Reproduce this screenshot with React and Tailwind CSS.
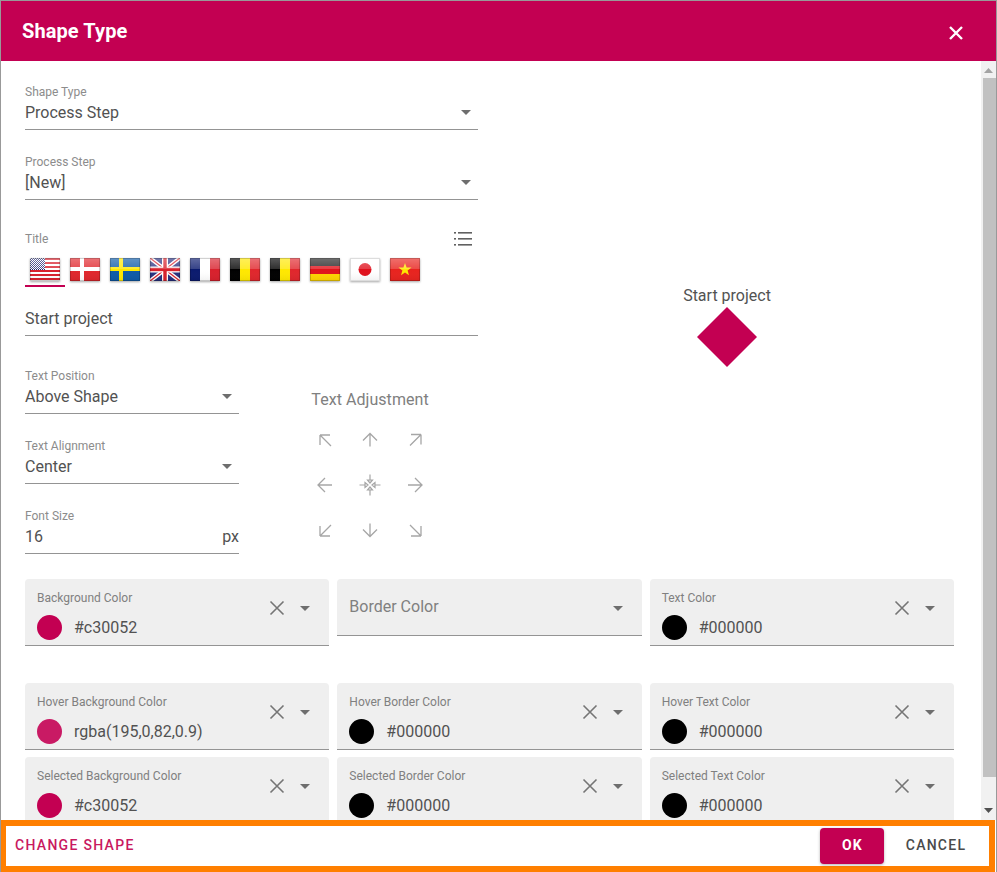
const row1 = [
  { label: 'Background Color', value: '#c30052', color: 'bg-[#c30052]' },
  { label: 'Border Color' },
  { label: 'Text Color', value: '#000000', color: 'bg-black' },
]
const row2 = [
  { label: 'Hover Background Color', value: 'rgba(195,0,82,0.9)', color: 'bg-[#c91a64]' },
  { label: 'Hover Border Color', value: '#000000', color: 'bg-black' },
  { label: 'Hover Text Color', value: '#000000', color: 'bg-black' },
]
const row3 = [
  { label: 'Selected Background Color', value: '#c30052', color: 'bg-[#c30052]' },
  { label: 'Selected Border Color', value: '#000000', color: 'bg-black' },
  { label: 'Selected Text Color', value: '#000000', color: 'bg-black' },
]

function Caret({ className = '' }) {
  return (
    <svg width="10" height="5" viewBox="0 0 10 5" className={className}>
      <path d="M0 0h10L5 5z" fill="#6e6e6e" />
    </svg>
  )
}

function Clear() {
  return (
    <svg width="16" height="16" viewBox="0 0 16 16" fill="none" stroke="#757575" strokeWidth="1.6">
      <path d="M1.5 1.5l13 13M14.5 1.5l-13 13" />
    </svg>
  )
}

function SelectField({ label, value, caret = true, suffix }) {
  return (
    <div className="w-full h-[46px] border-b border-[#949494]">
      <div className="h-[15px] pt-px text-[12px] leading-[14px] text-[#8c8c8c]">{label}</div>
      <div className="h-[30px] pt-[2px] flex items-start justify-between text-[16px] leading-[24px] text-[#525252]">
        <span>{value}</span>
        {caret && <Caret className="mt-[9px] mr-[7px]" />}
        {suffix && <span>{suffix}</span>}
      </div>
    </div>
  )
}

function ColorField({ label, value, color }) {
  if (!value) {
    return (
      <div className="h-[57px] bg-[#efefef] rounded-t border-b border-[#949494] pl-3 pr-[19px] flex items-start justify-between">
        <span className="mt-4 text-[16px] leading-[24px] text-[#808080]">{label}</span>
        <Caret className="mt-[27px]" />
      </div>
    )
  }
  return (
    <div className="h-[67px] bg-[#efefef] rounded-t border-b border-[#949494] pl-3 pr-[19px] flex items-start justify-between">
      <div>
        <div className="mt-3 text-[12px] leading-[14px] text-[#808080]">{label}</div>
        <div className="mt-[10px] flex items-center gap-3">
          <span className={`w-[25px] h-[25px] rounded-full ${color}`}></span>
          <span className="text-[16px] leading-[24px] text-[#525252]">{value}</span>
        </div>
      </div>
      <div className="mt-[21px] flex items-center gap-[15px]">
        <Clear />
        <Caret />
      </div>
    </div>
  )
}

function Flag({ children, light }) {
  return (
    <svg width="30" height="23" viewBox="0 0 30 23" className="drop-shadow-[0_1px_1px_rgba(0,0,0,0.35)]">
      <defs>
        <linearGradient id="gloss" x1="0" y1="0" x2="0" y2="1">
          <stop offset="0" stopColor="#fff" stopOpacity="0.35" />
          <stop offset="0.48" stopColor="#fff" stopOpacity="0.18" />
          <stop offset="0.5" stopColor="#fff" stopOpacity="0" />
          <stop offset="1" stopColor="#000" stopOpacity="0.06" />
        </linearGradient>
        <pattern id="stars" width="2" height="2" patternUnits="userSpaceOnUse">
          <rect width="2" height="2" fill="#1c2270" />
          <rect width="1" height="1" fill="#fff" />
          <rect x="1" y="1" width="1" height="1" fill="#fff" />
        </pattern>
      </defs>
      {children}
      <rect width="30" height="23" fill="url(#gloss)" />
      <rect x="0.5" y="0.5" width="29" height="22" fill="none" stroke={light ? '#dddddd' : '#000'} strokeOpacity={light ? 1 : 0.18} />
    </svg>
  )
}

const flags = [
  <Flag>
    <rect width="30" height="23" fill="#fff" />
    {[0, 4, 8, 12, 16, 20].map(y => <rect key={y} y={y} width="30" height="2" fill="#d8202c" />)}
    <rect width="15" height="12" fill="url(#stars)" />
  </Flag>,
  <Flag>
    <rect width="30" height="23" fill="#e0262c" />
    <rect x="10" width="4" height="23" fill="#fff" />
    <rect y="9" width="30" height="4" fill="#fff" />
  </Flag>,
  <Flag>
    <rect width="30" height="23" fill="#0d5aa7" />
    <rect x="9" width="4" height="23" fill="#ffe800" />
    <rect y="9" width="30" height="4" fill="#ffe800" />
  </Flag>,
  <Flag>
    <rect width="30" height="23" fill="#27307f" />
    <path d="M0 0L30 23M30 0L0 23" stroke="#fff" strokeWidth="4" />
    <path d="M0 0L30 23M30 0L0 23" stroke="#d8202c" strokeWidth="1.3" />
    <rect x="12" width="6" height="23" fill="#fff" />
    <rect y="8.5" width="30" height="6" fill="#fff" />
    <rect x="13.3" width="3.4" height="23" fill="#d8202c" />
    <rect y="9.8" width="30" height="3.4" fill="#d8202c" />
  </Flag>,
  <Flag>
    <rect width="10" height="23" fill="#0a1a6e" />
    <rect x="10" width="10" height="23" fill="#fff" />
    <rect x="20" width="10" height="23" fill="#d8202c" />
  </Flag>,
  <Flag>
    <rect width="10" height="23" fill="#000" />
    <rect x="10" width="10" height="23" fill="#ffe800" />
    <rect x="20" width="10" height="23" fill="#e0262c" />
  </Flag>,
  <Flag>
    <rect width="10" height="23" fill="#000" />
    <rect x="10" width="10" height="23" fill="#ffe800" />
    <rect x="20" width="10" height="23" fill="#e0262c" />
  </Flag>,
  <Flag>
    <rect width="30" height="8" fill="#222" />
    <rect y="8" width="30" height="8" fill="#e0141c" />
    <rect y="16" width="30" height="7" fill="#ffd500" />
  </Flag>,
  <Flag light>
    <rect width="30" height="23" fill="#fff" />
    <circle cx="15" cy="11.5" r="6.5" fill="#e0101c" />
  </Flag>,
  <Flag>
    <rect width="30" height="23" fill="#e8231e" />
    <path d="M15 5l1.6 4.6h4.9l-3.9 2.9 1.4 4.7-4-2.8-4 2.8 1.4-4.7-3.9-2.9h4.9z" fill="#ffe800" />
  </Flag>,
]

const adjust = [
  'M7 7h10M7 7v10M7 7l11 11',
  'M12 5.500v13M5 12.500l7-7 7 7',
  'M18 6.500H8M18 6.500v10M18 6.500L7 17.500',
  'M5 12h14M12 5l-7 7 7 7',
  null,
  'M5 12h14M12 5l7 7-7 7',
  'M7 18h10M7 18V8M7 18L18 7',
  'M12 5.500v13M5 11.500l7 7 7-7',
  'M18 18H8M18 18V8M18 18L7 7',
]

function Center() {
  return (
    <svg width="24" height="24" viewBox="0 0 24 24" fill="none" stroke="#a6a6a6" strokeWidth="1.2">
      <path d="M12 1.500v6M12 16.500v6M1.500 12h6M16.500 12h6" />
      <path d="M12 10l-2.500-3h5zM12 14l-2.500 3h5zM10 12l-3-2.500v5zM14 12l3-2.500v5z" />
    </svg>
  )
}

export default function App() {
  return (
    <div className="w-[997px] h-[872px] flex flex-col bg-white border-x border-t border-[#999999] overflow-hidden font-['Roboto',sans-serif]">
      <header className="h-[60px] shrink-0 bg-[#c30052] pl-[21px] pr-[32px] flex items-center justify-between">
        <h1 className="text-[20px] font-bold tracking-[0.1px] text-white">Shape Type</h1>
        <svg width="16" height="16" viewBox="0 0 16 16" stroke="#fff" strokeWidth="2.4" className="mt-[3px]">
          <path d="M2 2l12 12M14 2L2 14" />
        </svg>
      </header>

      <div className="flex-1 min-h-0 flex">
        <div className="flex-1 min-w-0 overflow-hidden pl-6 pt-[23px]">
          <div className="flex">
            <div className="w-[453px] shrink-0">
              <SelectField label="Shape Type" value="Process Step" />
              <div className="mt-6">
                <SelectField label="Process Step" value="[New]" />
              </div>
              <div className="mt-8 flex items-center justify-between h-[14px]">
                <span className="text-[12px] leading-[14px] text-[#8c8c8c]">Title</span>
                <svg width="20" height="16" viewBox="0 0 20 16" fill="#616161" className="mr-[5px]">
                  <rect x="5" y="1" width="14" height="1.6" />
                  <rect x="5" y="7" width="14" height="1.6" />
                  <rect x="5" y="13" width="14" height="1.6" />
                  <rect x="1" y="1" width="2" height="1.6" />
                  <rect x="1" y="7" width="2" height="1.6" />
                  <rect x="1" y="13" width="2" height="1.6" />
                </svg>
              </div>
              <div className="mt-[5px] flex">
                {flags.map((flag, i) => (
                  <div key={i} className={`w-10 h-9 pt-[7px] flex justify-center ${i === 0 ? 'border-b-2 border-[#c30052]' : ''}`}>
                    {flag}
                  </div>
                ))}
              </div>
              <div className="mt-5 h-[29px] border-b border-[#949494] text-[16px] leading-[24px] text-[#525252]">
                Start project
              </div>
              <div className="mt-8 flex">
                <div className="w-[214px] shrink-0 flex flex-col gap-6">
                  <SelectField label="Text Position" value="Above Shape" />
                  <SelectField label="Text Alignment" value="Center" />
                  <SelectField label="Font Size" value="16" caret={false} suffix="px" />
                </div>
                <div className="w-[180px] ml-[41px] pt-5 flex flex-col items-center">
                  <div className="text-[16px] leading-[24px] tracking-[0.05px] text-[#808080]">Text Adjustment</div>
                  <div className="mt-[5px] grid grid-cols-[45px_45px_45px] auto-rows-[45px]">
                    {adjust.map((d, i) => (
                      <div key={i} className="flex items-center justify-center">
                        {d ? (
                          <svg width="24" height="24" viewBox="0 0 24 24" fill="none" stroke="#a6a6a6" strokeWidth="1.3">
                            <path d={d} />
                          </svg>
                        ) : <Center />}
                      </div>
                    ))}
                  </div>
                </div>
              </div>
            </div>
            <div className="flex-1 pr-[5px] pt-[200px] flex flex-col items-center">
              <div className="h-[23px] text-[16px] leading-[24px] text-[#525252]">Start project</div>
              <svg width="60" height="60" viewBox="0 0 60 60">
                <path d="M30 0l30 30-30 30L0 30z" fill="#c30052" />
              </svg>
            </div>
          </div>

          <div className="w-[929px] mt-[25px]">
            <div className="grid grid-cols-3 gap-2 items-start h-[104px]">
              {row1.map(f => <ColorField key={f.label} {...f} />)}
            </div>
            <div className="grid grid-cols-3 gap-2 items-start mb-[7px]">
              {row2.map(f => <ColorField key={f.label} {...f} />)}
            </div>
            <div className="grid grid-cols-3 gap-2 items-start">
              {row3.map(f => <ColorField key={f.label} {...f} />)}
            </div>
          </div>
        </div>

        <div className="w-[15px] shrink-0 bg-[#f1f1f1] flex flex-col items-center">
          <svg width="9" height="5" viewBox="0 0 9 5" className="mt-[7px]">
            <path d="M0 5h9L4.500 0z" fill="#a3a3a3" />
          </svg>
          <div className="mt-[5px] w-[13px] ml-[1px] h-[699px] bg-[#c1c1c1]"></div>
          <svg width="9" height="5" viewBox="0 0 9 5" className="mt-[31px]">
            <path d="M0 0h9L4.500 5z" fill="#505050" />
          </svg>
        </div>
      </div>

      <footer className="h-[52px] shrink-0 w-[995px] -ml-px border-[6px] border-[#ff7f00] bg-white pl-[9px] pr-2 flex items-center justify-between">
        <span className="-mt-px text-[14px] font-medium tracking-[1.3px] text-[#c9195f]">CHANGE SHAPE</span>
        <div className="flex items-center gap-[7px]">
          <div className="w-16 h-9 pl-px pb-px bg-[#c30052] rounded flex items-center justify-center shadow-[0_1px_3px_rgba(0,0,0,0.3)] text-[14px] font-bold tracking-[1.25px] text-white">
            OK
          </div>
          <div className="w-[90px] h-9 pb-px flex items-center justify-center text-[14px] font-medium tracking-[1.25px] text-[#4a4a4a]">
            CANCEL
          </div>
        </div>
      </footer>
    </div>
  )
}
